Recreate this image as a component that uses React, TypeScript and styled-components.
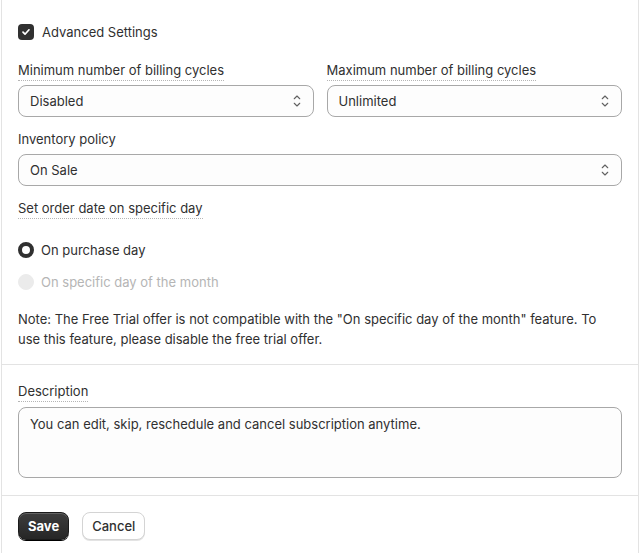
import styled, { createGlobalStyle } from "styled-components";

const GlobalStyle = createGlobalStyle`
  body {
    margin: 0;
    background: #fff;
    font-family: Inter, "Noto Sans", sans-serif;
    font-size: 13px;
    color: #303030;
  }
`;

function SelectIcon() {
  return (
    <svg width="20" height="20" viewBox="0 0 20 20" fill="none">
      <path
        d="M7.25 7.75L10 5l2.75 2.75M7.25 12.25L10 15l2.75-2.75"
        stroke="#616161"
        strokeWidth="1.1"
        strokeLinecap="round"
        strokeLinejoin="round"
      />
    </svg>
  );
}

function CheckIcon() {
  return (
    <svg width="12" height="12" viewBox="0 0 12 12" fill="none">
      <path
        d="M3 6.2l2 2 4-4.4"
        stroke="#fff"
        strokeWidth="1.7"
        strokeLinecap="round"
        strokeLinejoin="round"
      />
    </svg>
  );
}

export default function App() {
  return (
    <>
      <GlobalStyle />
      <Card>
        <Section $top={22} $bottom={15}>
          <CheckRow>
            <Checkbox>
              <CheckIcon />
            </Checkbox>
            Advanced Settings
          </CheckRow>

          <TwoCols>
            <Field>
              <Label $dotted>Minimum number of billing cycles</Label>
              <Select>
                Disabled
                <SelectIcon />
              </Select>
            </Field>
            <Field>
              <Label $dotted>Maximum number of billing cycles</Label>
              <Select>
                Unlimited
                <SelectIcon />
              </Select>
            </Field>
          </TwoCols>

          <Field $gap={12}>
            <Label>Inventory policy</Label>
            <Select>
              On Sale
              <SelectIcon />
            </Select>
          </Field>

          <Field $gap={12}>
            <Label $dotted>Set order date on specific day</Label>
          </Field>

          <RadioList>
            <RadioRow>
              <Radio $checked />
              On purchase day
            </RadioRow>
            <RadioRow $disabled>
              <Radio $disabled />
              On specific day of the month
            </RadioRow>
          </RadioList>

          <Note>
            Note: The Free Trial offer is not compatible with the "On specific
            day of the month" feature. To use this feature, please disable the
            free trial offer.
          </Note>
        </Section>

        <Section $top={16} $bottom={17}>
          <Field>
            <Label $dotted>Description</Label>
            <TextArea>
              You can edit, skip, reschedule and cancel subscription anytime.
            </TextArea>
          </Field>
        </Section>

        <Section $top={16} $bottom={16}>
          <Actions>
            <Button $primary>Save</Button>
            <Button>Cancel</Button>
          </Actions>
        </Section>
      </Card>
    </>
  );
}

const Card = styled.div`
  margin-left: 1px;
  width: 638px;
  box-sizing: border-box;
  border-left: 1px solid #e3e3e3;
  border-right: 1px solid #e3e3e3;
  min-height: 553px;
`;

const Section = styled.div<{ $top: number; $bottom: number }>`
  padding: ${(p) => p.$top}px 16px ${(p) => p.$bottom}px;
  & + & {
    border-top: 1px solid #e3e3e3;
  }
`;

const CheckRow = styled.label`
  display: flex;
  align-items: center;
  gap: 8px;
  line-height: 20px;
  height: 20px;
`;

const Checkbox = styled.span`
  display: inline-flex;
  align-items: center;
  justify-content: center;
  width: 16px;
  height: 16px;
  border-radius: 4px;
  background: #303030;
`;

const TwoCols = styled.div`
  display: grid;
  grid-template-columns: 1fr 1fr;
  gap: 13px;
  margin-top: 18px;
`;

const Field = styled.div<{ $gap?: number }>`
  display: flex;
  flex-direction: column;
  align-items: flex-start;
  margin-top: ${(p) => p.$gap ?? 0}px;
`;

const Label = styled.span<{ $dotted?: boolean }>`
  line-height: 20px;
  border-bottom: 1px dotted
    ${(p) => (p.$dotted ? "#b5b5b5" : "transparent")};
  margin-bottom: 4px;
`;

const Select = styled.div`
  align-self: stretch;
  display: flex;
  align-items: center;
  justify-content: space-between;
  box-sizing: border-box;
  height: 32px;
  padding: 0 6px 0 11px;
  border: 1px solid #a8a8a8;
  border-radius: 8px;
  background: #fdfdfd;
  line-height: 20px;
`;

const RadioList = styled.div`
  display: flex;
  flex-direction: column;
  gap: 12px;
  margin-top: 17px;
`;

const RadioRow = styled.label<{ $disabled?: boolean }>`
  display: flex;
  align-items: center;
  gap: 7px;
  line-height: 20px;
  color: ${(p) => (p.$disabled ? "#b5b5b5" : "#303030")};
`;

const Radio = styled.span<{ $checked?: boolean; $disabled?: boolean }>`
  width: 16px;
  height: 16px;
  box-sizing: border-box;
  border-radius: 50%;
  background: ${(p) => (p.$disabled ? "#ebebeb" : "#fff")};
  border: ${(p) =>
    p.$checked ? "4.5px solid #303030" : "1px solid #ebebeb"};
`;

const Note = styled.p`
  margin: 17px 0 0;
  line-height: 20px;
  padding-right: 10px;
`;

const TextArea = styled.div`
  align-self: stretch;
  box-sizing: border-box;
  height: 71px;
  margin-top: 1px;
  padding: 6px 11px;
  border: 1px solid #a8a8a8;
  border-radius: 8px;
  background: #fdfdfd;
  line-height: 20px;
`;

const Actions = styled.div`
  display: flex;
  gap: 13px;
`;

const Button = styled.button<{ $primary?: boolean }>`
  height: 28px;
  padding: 0 9px;
  border-radius: 8px;
  font-family: Inter, "Noto Sans", sans-serif;
  font-size: 13px;
  font-weight: ${(p) => (p.$primary ? 650 : 450)};
  cursor: pointer;
  color: ${(p) => (p.$primary ? "#fff" : "#303030")};
  background: ${(p) =>
    p.$primary ? "linear-gradient(#3d3d3d, #262626)" : "#fff"};
  border: 1px solid ${(p) => (p.$primary ? "#1a1a1a" : "#d4d4d4")};
  box-shadow: ${(p) =>
    p.$primary
      ? "inset 0 1px 0 rgba(255,255,255,0.2), 0 1px 0 #000"
      : "0 1px 0 #e3e3e3"};
`;
